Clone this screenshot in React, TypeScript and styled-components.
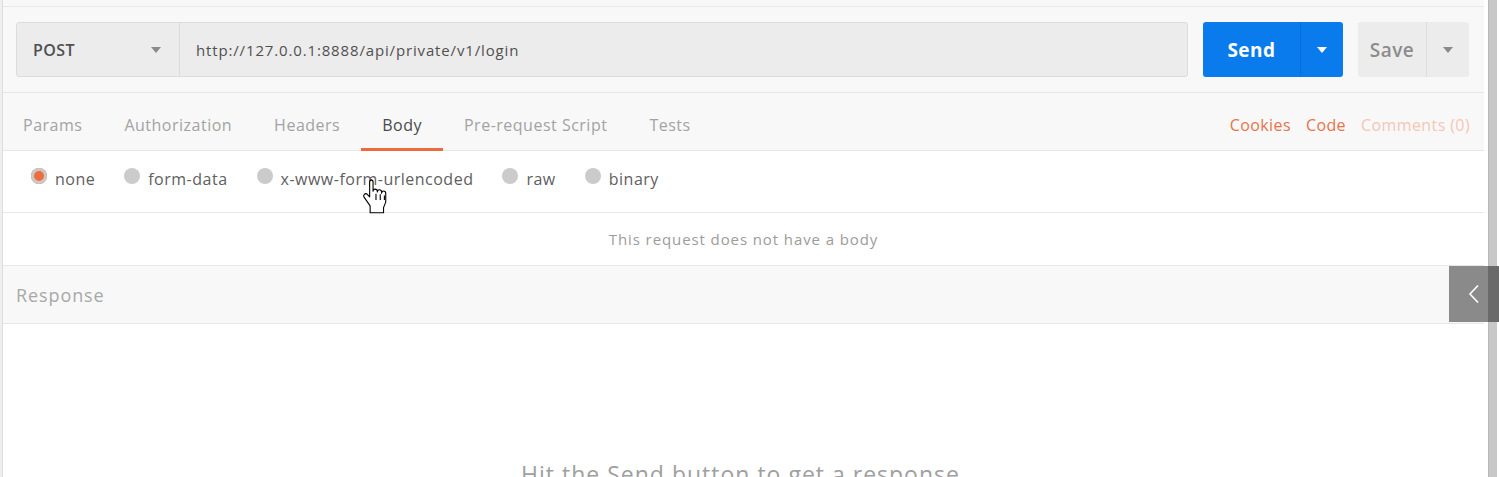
import React from "react";
import styled, { createGlobalStyle } from "styled-components";

const GlobalStyle = createGlobalStyle`
  html, body { margin: 0; padding: 0; background: #ffffff; }
  body { font-family: "Open Sans", "Liberation Sans", sans-serif; overflow: hidden; }
  * { box-sizing: border-box; }
`;

const Frame = styled.div`
  position: relative;
  display: flex;
  width: 1499px;
  height: 477px;
  overflow: hidden;
  background: #efefef;
  padding-left: 2px;
`;

const Main = styled.div`
  flex: 1;
  display: flex;
  flex-direction: column;
  background: #ffffff;
  border-left: 1px solid #dedede;
  min-width: 0;
  & > * { flex-shrink: 0; }
`;

const TopStrip = styled.div`
  height: 7px;
  background: #f8f8f8;
  border-bottom: 1px solid #e8e8e8;
`;

const RequestBar = styled.div`
  display: flex;
  align-items: stretch;
  gap: 15px;
  height: 86px;
  padding: 15px 15px 15px 13px;
  background: #f8f8f8;
  border-bottom: 1px solid #e6e6e6;
`;

const UrlGroup = styled.div`
  flex: 1;
  display: flex;
  border: 1px solid #dcdcdc;
  border-radius: 3px;
  background: #ececec;
  overflow: hidden;
`;

const MethodSelect = styled.div`
  width: 163px;
  display: flex;
  align-items: center;
  justify-content: space-between;
  padding: 0 18px 0 16px;
  border-right: 1px solid #d9d9d9;
  font-size: 16px;
  letter-spacing: 0.4px;
  font-weight: 600;
  color: #505050;
`;

const UrlText = styled.div`
  flex: 1;
  display: flex;
  align-items: center;
  padding-left: 16px;
  font-size: 15px;
  letter-spacing: 0.85px;
  color: #505050;
`;

const Caret = styled.span<{ $color: string }>`
  width: 0;
  height: 0;
  border-left: 5px solid transparent;
  border-right: 5px solid transparent;
  border-top: 6px solid ${(p) => p.$color};
`;

const SplitButton = styled.div<{ $bg: string; $width: number; $line: string }>`
  width: ${(p) => p.$width}px;
  display: flex;
  border-radius: 3px;
  background: ${(p) => p.$bg};
  overflow: hidden;
  & > *:last-child { border-left: 1px solid ${(p) => p.$line}; }
`;

const ButtonLabel = styled.div<{ $color: string; $weight: number }>`
  flex: 1;
  display: flex;
  align-items: center;
  justify-content: center;
  font-size: 19px;
  letter-spacing: 0.5px;
  font-weight: ${(p) => p.$weight};
  color: ${(p) => p.$color};
`;

const ButtonCaret = styled.div<{ $width: number }>`
  width: ${(p) => p.$width}px;
  display: flex;
  align-items: center;
  justify-content: center;
`;

const TabsRow = styled.div`
  display: flex;
  align-items: stretch;
  height: 58px;
  padding: 6px 14px 0 0;
  background: #f8f8f8;
  border-bottom: 1px solid #e6e6e6;
`;

const Tab = styled.div<{ $active?: boolean }>`
  position: relative;
  display: flex;
  align-items: center;
  padding: 0 21px;
  font-size: 16px;
  letter-spacing: 0.5px;
  color: ${(p) => (p.$active ? "#4a4a4a" : "#a3a3a3")};
  &:first-child { padding-left: 20px; }
  ${(p) =>
    p.$active &&
    `&::after {
      content: "";
      position: absolute;
      left: 0; right: 0; bottom: -1px;
      height: 3px;
      background: #ec6a3c;
    }`}
`;

const Spacer = styled.div`
  flex: 1;
`;

const Links = styled.div`
  display: flex;
  align-items: center;
  gap: 15px;
  font-size: 16px;
  letter-spacing: 0.4px;
`;

const Link = styled.span<{ $faded?: boolean }>`
  color: ${(p) => (p.$faded ? "#f6c6b3" : "#e8734a")};
`;

const RadioRow = styled.div`
  display: flex;
  align-items: center;
  height: 62px;
  padding: 0 0 6px 28px;
  gap: 29px;
  border-bottom: 1px solid #e8e8e8;
`;

const RadioItem = styled.label`
  display: flex;
  align-items: center;
  gap: 8px;
  font-size: 16px;
  letter-spacing: 0.5px;
  color: #606060;
`;

const RadioDot = styled.span<{ $checked?: boolean }>`
  width: 16px;
  height: 16px;
  border-radius: 50%;
  margin-top: -5px;
  background: ${(p) => (p.$checked ? "#ef6c3c" : "#cbcbcb")};
  box-shadow: ${(p) => (p.$checked ? "inset 0 0 0 3px #c9c9c9" : "none")};
`;

const EmptyBody = styled.div`
  display: flex;
  align-items: center;
  justify-content: center;
  height: 53px;
  font-size: 15px;
  letter-spacing: 0.9px;
  color: #9c9c9c;
  border-bottom: 1px solid #e8e8e8;
`;

const ResponseHeader = styled.div`
  display: flex;
  align-items: center;
  height: 58px;
  padding-left: 13px;
  background: #f7f8f7;
  border-bottom: 1px solid #e8e8e8;
  font-size: 18px;
  letter-spacing: 0.9px;
  color: #a8a8a8;
`;

const ResponseBody = styled.div`
  flex: 1;
  display: flex;
  justify-content: center;
  padding: 135px 6px 0 0;
  font-size: 23px;
  letter-spacing: 1px;
  line-height: 31px;
  color: #a0a0a0;
`;

const Scrollbar = styled.div`
  width: 15px;
  background: #ffffff;
  padding: 0 2px 0 4px;
  display: flex;
`;

const Thumb = styled.div`
  flex: 1;
  background: #c8c8c8;
  border-left: 1px solid #b8b8b8;
`;

const CollapseButton = styled.div`
  position: absolute;
  right: 0;
  top: 266px;
  width: 50px;
  height: 56px;
  display: flex;
  align-items: center;
  padding-left: 19px;
  background: linear-gradient(to right, #8a8a8a 0, #8a8a8a 39px, #6a6a6a 39px);
`;

const Cursor = styled.svg`
  position: absolute;
  left: 362px;
  top: 178px;
`;

export default function App() {
  return (
    <>
      <GlobalStyle />
      <Frame>
        <Main>
          <TopStrip />
          <RequestBar>
            <UrlGroup>
              <MethodSelect>
                POST
                <Caret $color="#8a8a8a" />
              </MethodSelect>
              <UrlText>http://127.0.0.1:8888/api/private/v1/login</UrlText>
            </UrlGroup>
            <SplitButton $bg="#097bed" $width={140} $line="#0a6cd0">
              <ButtonLabel $color="#ffffff" $weight={700}>Send</ButtonLabel>
              <ButtonCaret $width={43}>
                <Caret $color="#ffffff" />
              </ButtonCaret>
            </SplitButton>
            <SplitButton $bg="#ececec" $width={111} $line="#dddddd">
              <ButtonLabel $color="#8c8c8c" $weight={600}>Save</ButtonLabel>
              <ButtonCaret $width={43}>
                <Caret $color="#8a8a8a" />
              </ButtonCaret>
            </SplitButton>
          </RequestBar>
          <TabsRow>
            <Tab>Params</Tab>
            <Tab>Authorization</Tab>
            <Tab>Headers</Tab>
            <Tab $active>Body</Tab>
            <Tab>Pre-request Script</Tab>
            <Tab>Tests</Tab>
            <Spacer />
            <Links>
              <Link>Cookies</Link>
              <Link>Code</Link>
              <Link $faded>Comments (0)</Link>
            </Links>
          </TabsRow>
          <RadioRow>
            <RadioItem><RadioDot $checked />none</RadioItem>
            <RadioItem><RadioDot />form-data</RadioItem>
            <RadioItem><RadioDot />x-www-form-urlencoded</RadioItem>
            <RadioItem><RadioDot />raw</RadioItem>
            <RadioItem><RadioDot />binary</RadioItem>
          </RadioRow>
          <EmptyBody>This request does not have a body</EmptyBody>
          <ResponseHeader>Response</ResponseHeader>
          <ResponseBody>Hit the Send button to get a response</ResponseBody>
        </Main>
        <Scrollbar>
          <Thumb />
        </Scrollbar>
        <CollapseButton>
          <svg width="12" height="20" viewBox="0 0 12 20">
            <path d="M10 1.5 L2 10 L10 18.5" fill="none" stroke="#ffffff" strokeWidth="1.6" />
          </svg>
        </CollapseButton>
        <Cursor width="27" height="39" viewBox="0 0 22 32">
          <path
            d="M8 1.5c-1 0-1.8.8-1.8 1.8v12.2l-1.9-2c-.7-.7-1.8-.7-2.5 0-.6.6-.7 1.5-.2 2.2l5 7.2v5.6h11v-4.2l1.8-4.5v-7.3c0-1-.8-1.8-1.8-1.8s-1.6.8-1.6 1.8v-1c0-1-.8-1.8-1.8-1.8s-1.7.8-1.7 1.8v-.6c0-1-.8-1.8-1.8-1.8s-1.7.8-1.7 1.8V3.3c0-1-.8-1.8-1.8-1.8z"
            fill="#ffffff"
            stroke="#000000"
            strokeWidth="0.9"
            strokeLinejoin="round"
          />
          <path d="M11.4 13v5M14.9 13.4v4.6M18.3 14.4v3.6" stroke="#000" strokeWidth="0.9" />
        </Cursor>
      </Frame>
    </>
  );
}
